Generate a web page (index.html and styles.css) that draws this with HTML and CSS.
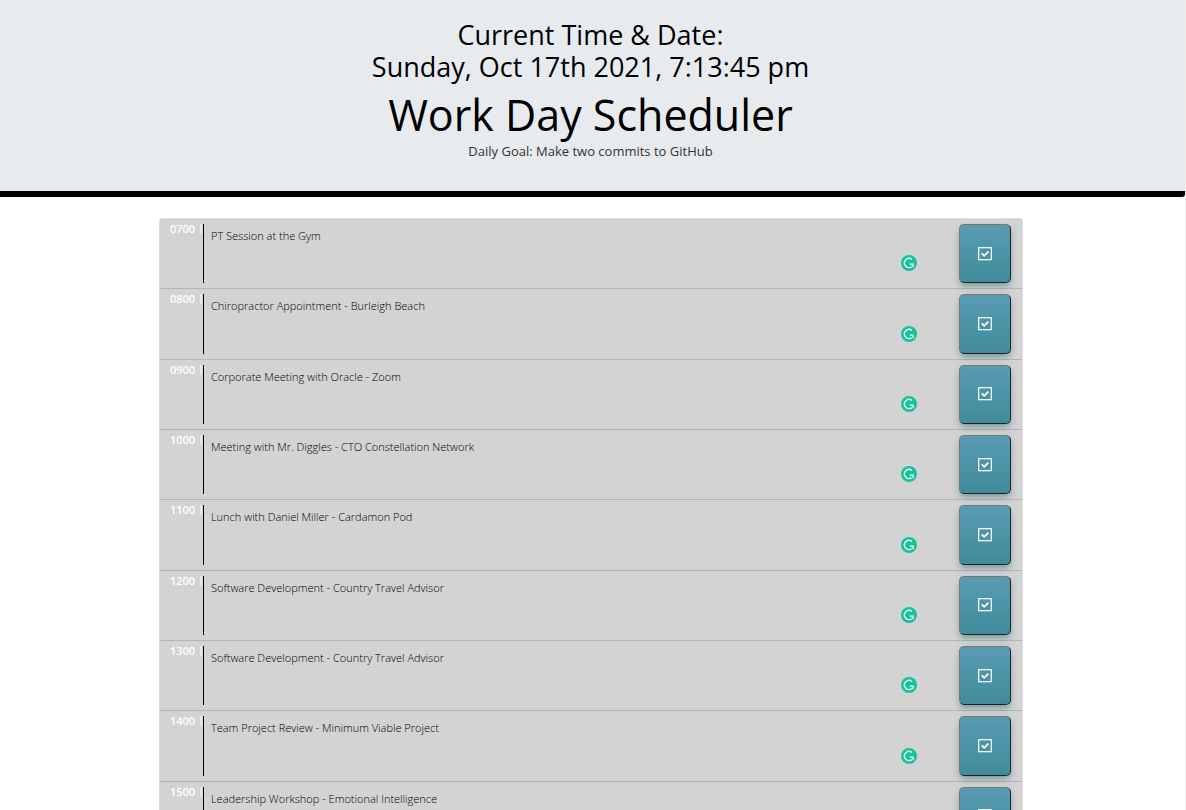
FILE: index.html
```
<!DOCTYPE html>
<html lang="en">
<head>
<meta charset="utf-8">
<meta name="viewport" content="width=device-width, initial-scale=1">
<title>Work Day Scheduler</title>
<link rel="stylesheet" href="styles.css">
</head>
<body>
<svg class="sprite" aria-hidden="true">
  <symbol id="check" viewBox="0 0 14 14">
    <rect x="0.7" y="0.7" width="12.6" height="12" fill="none" stroke="currentColor" stroke-width="1.2"/>
    <path d="M3.8 6.4 6.2 8.8 10.4 4.6" fill="none" stroke="currentColor" stroke-width="1.8"/>
  </symbol>
  <symbol id="grammar" viewBox="0 0 16 16">
    <circle cx="8" cy="8" r="8" fill="#15c39a"/>
    <path d="M10.9 4.5A4.5 4.5 0 1 0 10.6 11.6" fill="none" stroke="#fff" stroke-width="1.3"/>
    <path d="M8.8 8.4h3.9v3.9h-1.3V9.7H8.8z" fill="#fff"/>
  </symbol>
</svg>
<header class="banner">
  <p class="clock">Current Time &amp; Date:</p>
  <p class="clock">Sunday, Oct 17th 2021, 7:13:45 pm</p>
  <h1 class="title">Work Day Scheduler</h1>
  <p class="goal">Daily Goal: Make two commits to GitHub</p>
</header>
<main class="page">
  <div class="planner" id="planner"></div>
</main>
<script src="script.js"></script>
</body>
</html>
```
FILE: styles.css
```
* {
  box-sizing: border-box;
}

body {
  height: 100vh;
  margin: 0;
  overflow: hidden;
  background: #fff;
  border-right: 1px solid #f1f1f1;
  color: #000;
  font-family: "Open Sans", sans-serif;
  font-weight: 300;
}

.sprite {
  display: none;
}

.banner {
  padding: 19px 4px 31px 0;
  background: #e7ebee;
  border-bottom: 6px solid #000;
  border-radius: 0 0 3px 0;
  text-align: center;
}

.clock,
.title,
.goal {
  margin: 0;
  font-weight: 400;
}

.clock {
  font-size: 27px;
  line-height: 32px;
}

.title {
  margin-top: 5px;
  font-size: 43px;
  line-height: 54px;
}

.goal {
  color: #333;
  font-size: 13px;
  line-height: 18px;
}

.page {
  padding: 21px 3px 20px 0;
}

.planner {
  display: grid;
  grid-auto-rows: 1fr;
  width: 73.1%;
  min-height: 635px;
  margin: 0 auto;
  border: 1px solid #dedede;
  border-radius: 3px;
  background: #d3d3d3;
}

.row {
  display: grid;
  grid-template-columns: 32px 1fr 52px;
  column-gap: 1px;
  padding: 5px 11px 5px 10px;
  border-bottom: 1px solid #b5b5b5;
}

.hour {
  align-self: start;
  border-right: 2px solid #e8e8e8;
  color: #fff;
  font-size: 11px;
  font-weight: 600;
  line-height: 10px;
}

.entry {
  position: relative;
  display: flex;
}

.task {
  flex: 1;
  min-width: 0;
  margin-right: 24px;
  padding: 4px 7px;
  border: 0;
  border-left: 1px solid #000;
  background: none;
  color: #000;
  font: inherit;
  font-size: 11px;
  line-height: 16px;
  resize: none;
}

.grammar {
  position: absolute;
  right: 41px;
  bottom: 12px;
  width: 16px;
  height: 16px;
}

.save {
  padding: 0;
  border: 1px solid #222;
  border-top-color: #777;
  border-left-color: #777;
  border-radius: 5px;
  background: linear-gradient(#599bb3, #408c99);
  box-shadow: 0 4px 7px -1px rgba(39, 104, 115, 0.55);
  color: #fff;
  cursor: pointer;
}

.icon {
  display: block;
  width: 14px;
  height: 14px;
  margin: 0 auto;
}
```
FILE: script.js
```
const tasks = [
  ["0700", "PT Session at the Gym"],
  ["0800", "Chiropractor Appointment - Burleigh Beach"],
  ["0900", "Corporate Meeting with Oracle - Zoom"],
  ["1000", "Meeting with Mr. Diggles - CTO Constellation Network"],
  ["1100", "Lunch with Daniel Miller - Cardamon Pod"],
  ["1200", "Software Development - Country Travel Advisor"],
  ["1300", "Software Development - Country Travel Advisor"],
  ["1400", "Team Project Review - Minimum Viable Project"],
  ["1500", "Leadership Workshop - Emotional Intelligence"]
];

document.getElementById("planner").innerHTML = tasks.map(([hour, text]) => `
  <section class="row">
    <label class="hour" for="task-${hour}">${hour}</label>
    <div class="entry">
      <textarea class="task" id="task-${hour}" spellcheck="false">${text}</textarea>
      <svg class="grammar" aria-hidden="true"><use href="#grammar"/></svg>
    </div>
    <button class="save" type="button" aria-label="Save ${hour}"><svg class="icon" aria-hidden="true"><use href="#check"/></svg></button>
  </section>`).join("");
```
